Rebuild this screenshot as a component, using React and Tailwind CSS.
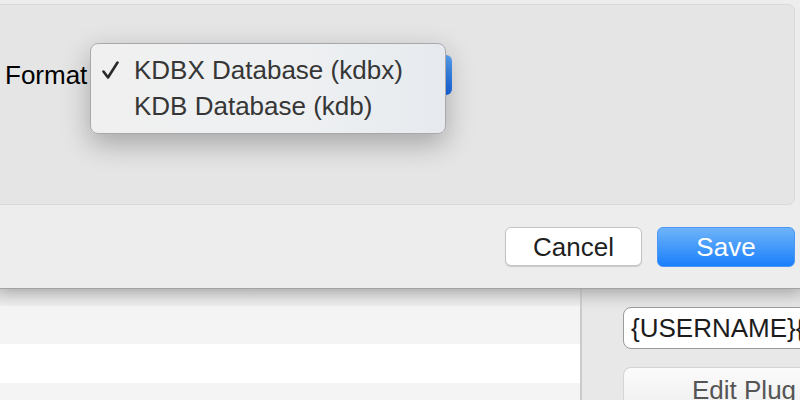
const FONT = { fontFamily: '"Liberation Sans", Arial, sans-serif' };

function CheckMark() {
  return (
    <svg width="17" height="18" viewBox="0 0 17 18" className="block">
      <path d="M1.5 10.5 L6 16.5 L15.5 1.5" fill="none" stroke="#2a2a2a" strokeWidth="2.6" strokeLinecap="round" strokeLinejoin="round" />
    </svg>
  );
}

function FormatMenu() {
  return (
    <div className="absolute left-[90px] top-[43px] w-[356px] rounded-[8px] border border-[#a9a9ab] bg-[linear-gradient(90deg,#f0f0f0_0%,#eef0f2_60%,#e6eaee_100%)] pt-[8px] pb-[9px] shadow-[0_10px_28px_rgba(0,0,0,0.28)]">
      <div className="flex h-[36px] items-center text-[26px] text-[#363636]">
        <span className="flex w-[43px] justify-start pl-[11px]">
          <CheckMark />
        </span>
        <span>KDBX Database (kdbx)</span>
      </div>
      <div className="flex h-[36px] items-center text-[26px] text-[#363636]">
        <span className="w-[43px]" />
        <span>KDB Database (kdb)</span>
      </div>
    </div>
  );
}

function SaveDialog() {
  return (
    <div className="relative z-10 h-[289px] border-b border-[#a3a3a3] bg-[#ededed] pt-[4px] shadow-[0_3px_14px_rgba(0,0,0,0.22)]">
      <div className="ml-[-20px] mr-[5px] h-[201px] rounded-[7px] border border-[#d9d9d9] bg-[#e5e5e5]">
        <div className="flex h-[132px] items-center pl-[24px] pt-[8px]">
          <span className="text-[26px] text-black">Format</span>
          <div className="ml-[12px] h-[40px] w-[353px] rounded-[6px] bg-[linear-gradient(180deg,#5aa6f8,#1668e8)]" />
        </div>
      </div>
      <div className="mt-[22px] flex justify-end gap-[15px] pr-[5px]">
        <button className="h-[39px] w-[137px] rounded-[6px] border border-[#c4c4c4] bg-white text-[26px] text-[#1f1f1f] shadow-[0_1px_1px_rgba(0,0,0,0.15)]">
          Cancel
        </button>
        <button className="h-[40px] w-[138px] rounded-[6px] border border-[#4a96f5] bg-[linear-gradient(180deg,#6fb4fa,#1a7ffb)] text-[26px] text-white">
          Save
        </button>
      </div>
      <FormatMenu />
    </div>
  );
}

function MainWindow() {
  return (
    <div className="flex h-[111px] overflow-hidden">
      <div className="w-[580px] shrink-0 bg-[#f4f4f4]">
        <div className="h-[17px] bg-[linear-gradient(180deg,#d8d8d8,#ececec)]" />
        <div className="h-[38px] bg-[#f4f4f4]" />
        <div className="h-[39px] bg-white" />
        <div className="h-[17px] bg-[#f4f4f4]" />
      </div>
      <div className="w-[2px] shrink-0 bg-[#cbcbcb]" />
      <div className="min-w-0 flex-1 overflow-hidden bg-[linear-gradient(180deg,#d6d6d6_0px,#e8e8e8_22px)] pl-[41px] pt-[18px]">
        <div className="flex h-[42px] w-[200px] items-center whitespace-nowrap rounded-[8px] border-[1.5px] border-[#9a9a9a] bg-white pl-[7px] text-[26px] text-[#1c1c1c]">
          {"{USERNAME}{"}
        </div>
        <div className="mt-[18px] h-[40px] w-[200px] whitespace-nowrap rounded-[8px] border border-[#d4d4d4] bg-[linear-gradient(180deg,#fbfbfb,#f0f0f0)] pl-[68px] pt-[3px] text-[26px] text-[#555]">
          Edit Plug
        </div>
      </div>
    </div>
  );
}

export default function App() {
  return (
    <div className="h-[400px] w-[800px] overflow-hidden bg-[#ededed]" style={FONT}>
      <SaveDialog />
      <MainWindow />
    </div>
  );
}
